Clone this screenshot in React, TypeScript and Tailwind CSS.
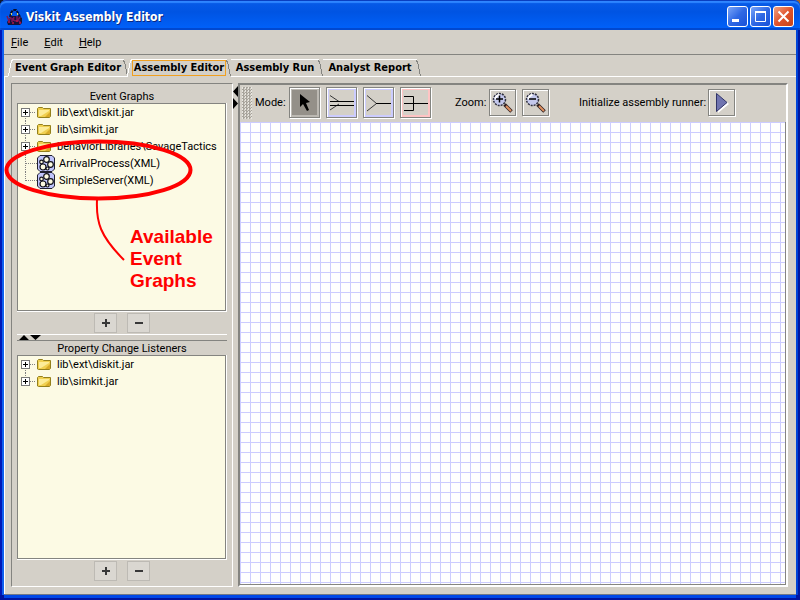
import type { ReactNode } from "react";

const HEADING_FONT = "font-['DejaVu_Sans_Condensed','DejaVu_Sans',sans-serif]";

function AppLogo() {
  return (
    <svg className="h-[18px] w-[17px]" viewBox="0 0 17 18" aria-hidden="true">
      <path d="M4 9L5 5L7 2L10 2L12 5L14 9" fill="none" stroke="#0a1030" strokeWidth="2" strokeDasharray="3 1" />
      <path d="M5 8h8l3 2v5l-2 2H2l-1-3z" fill="#14123a" />
      <path d="M1 8l2 5 2-4M6 10v4M8 9l-1 3 3 1M11 8v6M14 9l-2 3 3 3" fill="none" stroke="#7a1658" strokeWidth="1.500" />
      <path d="M2 14h2M6 15h2M10 13h2M13 15h2" stroke="#b01848" strokeWidth="1.500" />
      <path d="M5 5h1v2H5zM11 5h1v2h-1z" fill="#e8d850" />
    </svg>
  );
}

function CaptionButton({ label, close, children }: { label: string; close?: boolean; children: ReactNode }) {
  const fill = close
    ? "bg-linear-to-br from-[#f0a080] via-[#e0532c] to-[#c84418]"
    : "bg-linear-to-br from-[#7aa4f8] via-[#2f68e4] to-[#1850d8]";
  return (
    <button type="button" aria-label={label} className={`size-[21px] rounded-[3px] border border-white ${fill}`}>
      <svg className="size-[19px]" viewBox="0 0 19 19" fill="none" stroke="#fff">
        {children}
      </svg>
    </button>
  );
}

function TitleBar() {
  return (
    <header className="relative z-10 flex h-[30px] shrink-0 items-center rounded-t-[6px] bg-linear-to-b from-[#0a5ce8] via-[#0054e3] via-40% to-[#0062fb] pt-[3px] pr-[6px] pl-[6px] shadow-[inset_0_1px_0_#0a3fc0,inset_0_3px_1px_#2f86ff,inset_0_-2px_0_#0048d0]">
      <AppLogo />
      <h1 className={`ml-[3px] flex-1 text-[12px] leading-[18px] font-bold text-white [text-shadow:1px_1px_0_#0a2880] ${HEADING_FONT}`}>
        Viskit Assembly Editor
      </h1>
      <div className="flex gap-[2px]">
        <CaptionButton label="Minimize">
          <path d="M4 13.500h7" strokeWidth="3" />
        </CaptionButton>
        <CaptionButton label="Maximize">
          <path d="M4.500 4v10.500h10V4" />
          <path d="M4 5h11" strokeWidth="2" />
        </CaptionButton>
        <CaptionButton label="Close" close>
          <path d="M4.500 4.500l10 10M14.500 4.500l-10 10" strokeWidth="2" />
        </CaptionButton>
      </div>
    </header>
  );
}

function MenuBar() {
  return (
    <nav className="flex h-[25px] shrink-0 items-center gap-4 border-b border-[#848480] pt-[2px] pl-[7px]">
      {["File", "Edit", "Help"].map((name) => (
        <button key={name} type="button">
          <span className="underline underline-offset-1">{name[0]}</span>
          {name.slice(1)}
        </button>
      ))}
    </nav>
  );
}

function Edge({ side, d }: { side: "left" | "right"; d: string }) {
  return (
    <svg className="h-[18px] w-1 overflow-visible" viewBox="0 0 4 18" fill="none" aria-hidden="true">
      <path d={d} stroke={side === "left" ? "#fff" : "#848480"} shapeRendering="crispEdges" />
    </svg>
  );
}

function Tab({ label, selected, width }: { label: string; selected?: boolean; width: string }) {
  return (
    <div className={`flex h-[18px] ${selected ? "" : "border-b border-white"}`}>
      <button
        type="button"
        role="tab"
        aria-selected={!!selected}
        className={`flex items-start justify-center border-t border-white text-[11px] font-bold whitespace-nowrap ${HEADING_FONT} ${width}`}
      >
        <span className={selected ? "h-4 border border-[#f0a020] px-px leading-[13px]" : "leading-4"}>{label}</span>
      </button>
      <Edge side="right" d="M-1 1L0.500 3L3.500 17" />
    </div>
  );
}

function TabStrip() {
  return (
    <div className="mt-1 flex shrink-0" role="tablist">
      <div className="w-1 border-b border-white" />
      <Edge side="left" d="M0.500 17L3.500 2L5 0.500" />
      <Tab label="Event Graph Editor" width="w-[112px]" />
      <div className="-ml-px flex">
        <Edge side="left" d="M0.500 17L3.500 2L5 0.500" />
      </div>
      <Tab label="Assembly Editor" selected width="w-[96px]" />
      <Tab label="Assembly Run" width="w-[88px]" />
      <Tab label="Analyst Report" width="w-[94px]" />
      <div className="flex-1 border-b border-white" />
    </div>
  );
}

function FolderIcon() {
  return (
    <svg className="h-3 w-[14px]" viewBox="0 0 14 12" aria-hidden="true">
      <path d="M0.500 10V1.500L1.500 0.500H5.500L6.500 1.500H13.500V9.500L12.500 10.500H1.500Z" fill="#f0d050" stroke="#94801c" />
      <path d="M2 3h10v1L4 9H2z" fill="#fcec98" />
      <path d="M8 10l5-5v5z" fill="#d8aa28" />
    </svg>
  );
}

function GraphIcon() {
  return (
    <svg className="h-[17px] w-[18px]" viewBox="0 0 18 17" aria-hidden="true">
      <path d="M3 0.500H15L17.500 3V14L15 16.500H3L0.500 14V3Z" fill="#c0c4fc" stroke="#202030" />
      <g fill="#fdfae0" stroke="#101018" strokeWidth="1.200">
        <circle cx="9.500" cy="4.500" r="2.800" />
        <circle cx="4.500" cy="7" r="1.800" />
        <circle cx="13.500" cy="9.500" r="2.800" />
        <circle cx="6" cy="12" r="3" />
        <circle cx="10.500" cy="13.500" r="1.500" />
      </g>
    </svg>
  );
}

type Item = { name: string; leaf?: boolean };

function Branch({ first, last, leaf }: { first: boolean; last: boolean; leaf?: boolean }) {
  const stem = `M4.500 ${first ? 8 : 0}V${last ? 9 : 17}M5 8.500H${leaf ? 16 : 15}`;
  return (
    <svg className="h-[17px] w-4" viewBox="0 0 16 17" fill="none" shapeRendering="crispEdges" aria-hidden="true">
      <path d={stem} stroke="#808080" strokeDasharray="1 1" />
      {!leaf && (
        <>
          <rect x="0.500" y="4.500" width="8" height="8" fill="#fff" stroke="#787878" />
          <path d="M2 8.500h5M4.500 6v5" stroke="#000" />
        </>
      )}
    </svg>
  );
}

function Tree({ items }: { items: Item[] }) {
  return (
    <ul>
      {items.map((item, i) => (
        <li key={item.name} className="flex h-[17px] items-center whitespace-nowrap">
          <Branch first={i === 0} last={i === items.length - 1} leaf={item.leaf} />
          {item.leaf ? <GraphIcon /> : <FolderIcon />}
          <span className={item.leaf ? "ml-1" : "ml-[6px]"}>{item.name}</span>
        </li>
      ))}
    </ul>
  );
}

function ListButtons({ subject }: { subject: string }) {
  return (
    <div className="flex h-[22px] shrink-0 items-center justify-center gap-[10px]">
      {[
        { label: `Add ${subject}`, d: "M4 6h8M8 2v8" },
        { label: `Remove ${subject}`, d: "M4 6h8" },
      ].map(({ label, d }) => (
        <button
          key={label}
          type="button"
          aria-label={label}
          className="flex h-5 w-[23px] items-center justify-center border border-[#bdbab4] bg-[#dad7d1]"
        >
          <svg className="h-3 w-4" viewBox="0 0 16 12">
            <path d={d} stroke="#383838" strokeWidth="2" />
          </svg>
        </button>
      ))}
    </div>
  );
}

function ListSection({ title, items, subject, size }: { title: string; items: Item[]; subject: string; size: string }) {
  return (
    <section className={`flex flex-col ${size}`}>
      <h2 className="h-[14px] shrink-0 text-center leading-4">{title}</h2>
      <div className="min-h-0 flex-1 border-r border-b border-white">
        <div className="h-full overflow-hidden border border-[#848480] bg-[#fcfae4] pl-[3px]">
          <Tree items={items} />
        </div>
      </div>
      <ListButtons subject={subject} />
    </section>
  );
}

function SidePanel() {
  return (
    <aside className="flex w-[222px] shrink-0 flex-col border border-t-[#848480] border-r-white border-b-white border-l-[#848480] px-[5px] pt-[5px]">
      <ListSection
        title="Event Graphs"
        subject="event graph"
        size="h-[245px] shrink-0"
        items={[
          { name: "lib\\ext\\diskit.jar" },
          { name: "lib\\simkit.jar" },
          { name: "behaviorLibraries\\SavageTactics" },
          { name: "ArrivalProcess(XML)", leaf: true },
          { name: "SimpleServer(XML)", leaf: true },
        ]}
      />
      <div className="h-[7px] shrink-0 border-t border-b border-t-white border-b-[#848480]">
        <svg className="h-[5px] w-6" viewBox="0 0 24 5" aria-hidden="true">
          <path d="M2 5h10L7 0zM13 0h11l-5.500 5z" fill="#000" />
        </svg>
      </div>
      <ListSection
        title="Property Change Listeners"
        subject="listener"
        size="min-h-0 flex-1 pb-1"
        items={[{ name: "lib\\ext\\diskit.jar" }, { name: "lib\\simkit.jar" }]}
      />
    </aside>
  );
}

function ToolButton({ label, tone, size, children }: { label: string; tone?: string; size: string; children: ReactNode }) {
  return (
    <button
      type="button"
      aria-label={label}
      className={`flex shrink-0 items-center justify-center border border-[#848480] shadow-[1px_1px_0_#fff,inset_1px_1px_0_#fff] ${size} ${tone ?? ""}`}
    >
      {children}
    </button>
  );
}

function ModeButton({ label, ring, fill, children }: { label: string; ring: string; fill: string; children: ReactNode }) {
  return (
    <ToolButton label={label} size="size-[31px]" tone={ring}>
      <svg className={`size-[25px] ${fill}`} viewBox="0 0 25 25" fill="none" stroke="#000">
        {children}
      </svg>
    </ToolButton>
  );
}

function Magnifier({ plus }: { plus?: boolean }) {
  return (
    <svg className="size-[21px]" viewBox="0 0 21 21" fill="none" aria-hidden="true">
      <path d="M12.500 12.500L19.500 19.500" stroke="#302020" strokeWidth="3.500" />
      <path d="M14 14L19 19" stroke="#e09060" strokeWidth="2" />
      <circle cx="7.500" cy="7.500" r="6" fill="#c4c8ec" stroke="#303040" strokeWidth="1.500" strokeDasharray="2 1" />
      <path d="M3.500 7a4 4 0 0 1 4-4" stroke="#fff" strokeWidth="2" />
      <path d={plus ? "M4 7h7M7.500 3.500v7" : "M4 7h7"} stroke="#000" strokeWidth="1.500" />
    </svg>
  );
}

function Toolbar() {
  return (
    <div className="flex h-[37px] shrink-0 items-center bg-[#d4d0c8] pb-[2px] pl-[2px]" role="toolbar">
      <div className="h-8 w-[10px] shrink-0 bg-[conic-gradient(#a8a49c_25%,transparent_0_50%,#a8a49c_0_75%,#e8e6e0_0)] bg-size-[3px_3px]" />
      <span className="ml-[3px] w-[34px]">Mode:</span>
      <div className="flex gap-[6px]">
        <ModeButton label="Select" ring="bg-[#bcb9b3]" fill="bg-[#949089]">
          <path d="M8 4v13l3-3 4 7 2-1-3-7 4-1z" fill="#000" stroke="none" />
        </ModeButton>
        <ModeButton label="Adapter" ring="bg-[#ccccff]" fill="bg-[#d4d0c8]">
          <path d="M1 5.500l9 6M1 20l9-6" stroke="#383838" />
          <path d="M1 11.500h24M1 15.500h24" />
        </ModeButton>
        <ModeButton label="Sim event listener" ring="bg-[#ccccff]" fill="bg-[#d4d0c8]">
          <path d="M1 5.500l9.500 8L1 21" stroke="#383838" />
          <path d="M10 13.500h15" />
        </ModeButton>
        <ModeButton label="Property change listener" ring="bg-[#ffc4c4]" fill="bg-[#d4d0c8]">
          <path d="M1 6.500h9.500v14H1M1 13.500h24" />
        </ModeButton>
      </div>
      <span className="ml-6 w-[34px]">Zoom:</span>
      <div className="flex gap-[6px]">
        <ToolButton label="Zoom in" size="size-[27px]">
          <Magnifier plus />
        </ToolButton>
        <ToolButton label="Zoom out" size="size-[27px]">
          <Magnifier />
        </ToolButton>
      </div>
      <span className="ml-[30px] w-[129px] whitespace-nowrap">Initialize assembly runner:</span>
      <ToolButton label="Initialize assembly runner" size="size-[27px]">
        <svg className="size-[21px]" viewBox="0 0 21 21">
          <path d="M7 3v18L18 12z" fill="#fff" />
          <path d="M5.500 1.500v18L16 10.500z" fill="#7074b0" stroke="#303468" />
        </svg>
      </ToolButton>
    </div>
  );
}

function Annotation() {
  return (
    <div className="pointer-events-none absolute top-[136px] left-[2px] text-[#f00]">
      <svg className="h-[128px] w-[194px]" viewBox="0 0 194 128" fill="none" stroke="currentColor" aria-hidden="true">
        <ellipse cx="96.500" cy="34" rx="92" ry="28.500" strokeWidth="4" />
        <path d="M95 64C94 86 98 100 122 124" strokeWidth="2" />
      </svg>
      <p className="absolute top-[90px] left-[128px] font-['Liberation_Sans',Arial,sans-serif] text-[19px] leading-[22px] font-bold">
        Available
        <br />
        Event
        <br />
        Graphs
      </p>
    </div>
  );
}

export default function App() {
  return (
    <div className="relative flex h-screen flex-col overflow-hidden bg-linear-to-r from-[#10182c] to-[#a86428] font-[Roboto,'Noto_Sans',sans-serif] text-[11px] leading-[14px] text-black">
      <TitleBar />
      <main className="mx-1 mb-[5px] flex min-h-0 flex-1 flex-col border-b border-[#707888] bg-[#d4d0c8] shadow-[0_3px_0_#0048e8,0_5px_0_#0014a0,-2px_0_0_#1060f0,-4px_0_0_#0018b8,2px_0_0_#0044d8,4px_0_0_#0018a0,0_0_0_5px_#0014a0]">
        <MenuBar />
        <TabStrip />
        <div className="flex min-h-0 flex-1 gap-[5px] border-l border-white pt-[6px] pr-2 pb-[7px] pl-[6px]">
          <SidePanel />
          <div className="relative flex min-w-0 flex-1 flex-col border-2 border-t-[#848480] border-r-white border-b-white border-l-[#848480]">
            <svg className="absolute top-0 -left-[7px] h-6 w-[6px]" viewBox="0 0 6 24" aria-hidden="true">
              <path d="M5 1v11L0 6.500zM0 13v11l5-5.500z" fill="#000" />
            </svg>
            <Toolbar />
            <div className="min-h-0 flex-1 border-r border-b border-[#848480] bg-white bg-[linear-gradient(to_right,#ccccff_1px,transparent_1px),linear-gradient(to_bottom,#ccccff_1px,transparent_1px)] bg-size-[10px_10px]" />
          </div>
        </div>
      </main>
      <Annotation />
    </div>
  );
}
